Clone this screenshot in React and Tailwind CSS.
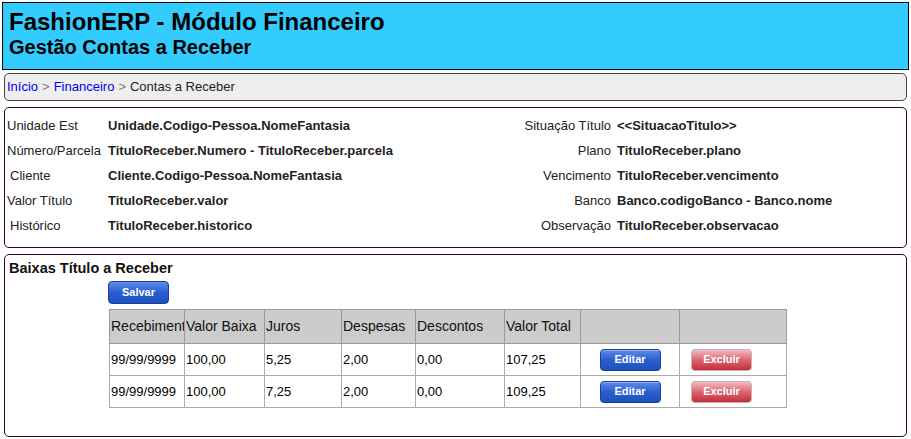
import React from 'react';

const font = { fontFamily: '"Liberation Sans", Arial, sans-serif' };

const leftRows = [
  { label: 'Unidade Est', value: 'Unidade.Codigo-Pessoa.NomeFantasia', indent: false },
  { label: 'Número/Parcela', value: 'TituloReceber.Numero - TituloReceber.parcela', indent: false },
  { label: 'Cliente', value: 'Cliente.Codigo-Pessoa.NomeFantasia', indent: true },
  { label: 'Valor Título', value: 'TituloReceber.valor', indent: false },
  { label: 'Histórico', value: 'TituloReceber.historico', indent: true },
];

const rightRows = [
  { label: 'Situação Título', value: '<<SituacaoTitulo>>' },
  { label: 'Plano', value: 'TituloReceber.plano' },
  { label: 'Vencimento', value: 'TituloReceber.vencimento' },
  { label: 'Banco', value: 'Banco.codigoBanco - Banco.nome' },
  { label: 'Observação', value: 'TituloReceber.observacao' },
];

const baixas = [
  { data: '99/99/9999', valor: '100,00', juros: '5,25', despesas: '2,00', descontos: '0,00', total: '107,25' },
  { data: '99/99/9999', valor: '100,00', juros: '7,25', despesas: '2,00', descontos: '0,00', total: '109,25' },
];

const columns = [
  { title: 'Recebimento', width: 75 },
  { title: 'Valor Baixa', width: 80 },
  { title: 'Juros', width: 77 },
  { title: 'Despesas', width: 74 },
  { title: 'Descontos', width: 89 },
  { title: 'Valor Total', width: 76 },
  { title: '', width: 99 },
  { title: '', width: 107 },
];

const BlueButton = ({ children }) => (
  <button className="h-[22px] w-[61px] rounded-[4px] border border-[#1c3f96] bg-gradient-to-b from-[#5f8ae6] via-[#2b5fcf] to-[#1f4fbf] text-[11px] font-bold text-white leading-none shadow-[inset_0_1px_0_rgba(255,255,255,0.35)]">
    {children}
  </button>
);

const RedButton = ({ children }) => (
  <button className="h-[22px] w-[61px] rounded-[4px] border border-[#c4b4b8] bg-gradient-to-b from-[#f1b9c0] via-[#dc6472] to-[#c42a3c] text-[11px] font-bold text-white leading-none">
    {children}
  </button>
);

export default function App() {
  return (
    <div className="w-[911px] h-[439px] bg-white text-black px-[2px] pt-[2px]" style={font}>
      <div className="border border-black bg-[#33ccff] h-[68px] px-[6px] pt-[5px]">
        <h1 className="text-[24px] font-bold leading-[28px]">FashionERP - Módulo Financeiro</h1>
        <h2 className="text-[20px] font-bold leading-[22px]">Gestão Contas a Receber</h2>
      </div>

      <div className="mx-[2px] mt-[3px] h-[28px] rounded-[5px] border border-[#444] bg-[#eeeeee] px-[2px] flex items-center text-[13px] text-[#222]">
        <span className="text-[#0000ee]">Início</span>
        <span className="text-[#777] mx-[4px]">&gt;</span>
        <span className="text-[#0000ee]">Financeiro</span>
        <span className="text-[#777] mx-[4px]">&gt;</span>
        <span>Contas a Receber</span>
      </div>

      <div className="mx-[2px] mt-[6px] h-[141px] rounded-[5px] border border-[#330033] pt-[5px] flex text-[13px]">
        <div className="w-[450px]">
          {leftRows.map((r) => (
            <div key={r.label} className="h-[25px] flex items-center">
              <span className={`w-[103px] pl-[2px] text-[#222] ${r.indent ? 'pl-[5px]' : ''}`}>{r.label}</span>
              <span className="font-bold text-[#222] whitespace-nowrap">{r.value}</span>
            </div>
          ))}
        </div>
        <div className="flex-1">
          {rightRows.map((r) => (
            <div key={r.label} className="h-[25px] flex items-center">
              <span className="w-[156px] text-right text-[#222] whitespace-nowrap">{r.label}</span>
              <span className="ml-[6px] font-bold text-[#222] whitespace-nowrap">{r.value}</span>
            </div>
          ))}
        </div>
      </div>

      <div className="mx-[2px] mt-[6px] h-[183px] rounded-[5px] border border-[#330033] pt-[5px] text-[13px]">
        <div className="pl-[4px] text-[14.5px] font-bold leading-[16px] text-[#111]">Baixas Título a Receber</div>
        <div className="ml-[103px] mt-[5px]">
          <button className="h-[23px] w-[61px] rounded-[4px] border border-[#1c3f96] bg-gradient-to-b from-[#5f8ae6] via-[#2b5fcf] to-[#1f4fbf] text-[11px] font-bold text-white leading-none">
            Salvar
          </button>
        </div>
        <table className="ml-[104px] mt-[5px] border-collapse table-fixed w-[678px]">
          <colgroup>
            {columns.map((c, i) => (
              <col key={i} style={{ width: c.width }} />
            ))}
          </colgroup>
          <thead>
            <tr className="h-[34px] bg-[#cccccc]">
              {columns.map((c, i) => (
                <th key={i} className="border border-[#999] px-[1px] text-left text-[14px] font-normal whitespace-nowrap overflow-hidden text-[#111]">
                  {c.title}
                </th>
              ))}
            </tr>
          </thead>
          <tbody>
            {baixas.map((b, i) => (
              <tr key={i} className="h-[32px]">
                <td className="border border-[#aaa] px-[1px] whitespace-nowrap overflow-hidden">{b.data}</td>
                <td className="border border-[#aaa] px-[1px]">{b.valor}</td>
                <td className="border border-[#aaa] px-[1px]">{b.juros}</td>
                <td className="border border-[#aaa] px-[1px]">{b.despesas}</td>
                <td className="border border-[#aaa] px-[1px]">{b.descontos}</td>
                <td className="border border-[#aaa] px-[1px]">{b.total}</td>
                <td className="border border-[#aaa] text-center">
                  <BlueButton>Editar</BlueButton>
                </td>
                <td className="border border-[#aaa] pl-[11px]">
                  <RedButton>Excluir</RedButton>
                </td>
              </tr>
            ))}
          </tbody>
        </table>
      </div>
    </div>
  );
}
